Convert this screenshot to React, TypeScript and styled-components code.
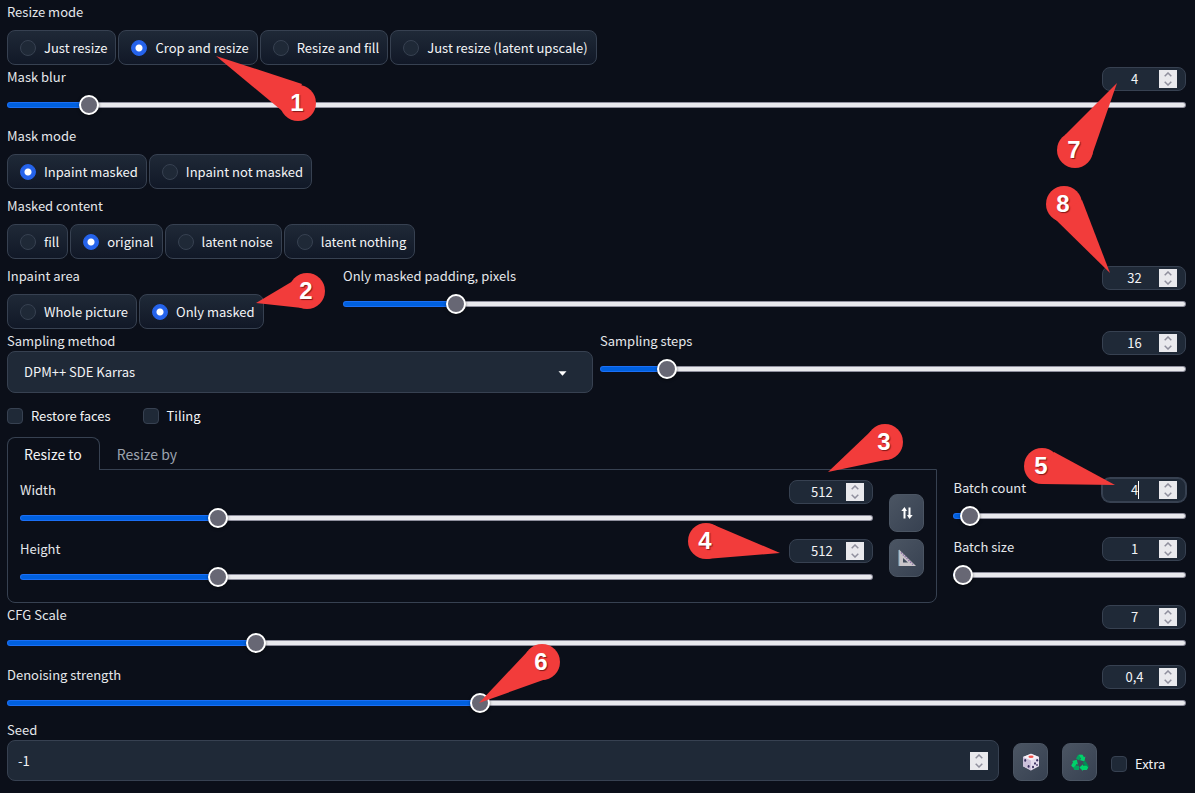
import React, { useId, useState } from "react";
import styled, { createGlobalStyle, css } from "styled-components";

const color = {
  page: "#0b0f19",
  field: "#1f2937",
  fieldDeep: "#111827",
  border: "#374151",
  text: "#f3f4f6",
  label: "#e5e7eb",
  muted: "#9ca3af",
  accent: "#2563eb",
  pin: "#f23c3b",
};

const GlobalStyle = createGlobalStyle`
  *, *::before, *::after { box-sizing: border-box; }
  body {
    margin: 0;
    background: ${color.page};
    color: ${color.text};
    font-family: "Noto Sans CJK SC", "Noto Sans", sans-serif;
    font-size: 13px;
    line-height: 20px;
  }
  button, input, select { font: inherit; color: inherit; margin: 0; }
`;

const Page = styled.main`
  position: relative;
  display: flex;
  flex-direction: column;
  padding: 2px 9px 12px 7px;
`;

const Row = styled.div<{ $top: number; $columns?: string; $gap?: number }>`
  display: grid;
  grid-template-columns: ${(p) => p.$columns ?? "minmax(0, 1fr)"};
  gap: ${(p) => p.$gap ?? 7}px;
  align-items: start;
  margin-top: ${(p) => p.$top}px;
`;

const LabelText = styled.label`
  display: block;
  color: ${color.label};
  line-height: 20px;
  white-space: nowrap;
`;

/* ---------- radio groups ---------- */

const Group = styled.fieldset`
  border: 0;
  margin: 0;
  padding: 0;
  min-width: 0;
`;

const Legend = styled.legend`
  padding: 0;
  margin-bottom: 8px;
  color: ${color.label};
`;

const Pills = styled.div`
  display: flex;
  gap: 2px;
`;

const Pill = styled.label`
  display: flex;
  align-items: center;
  gap: 8px;
  height: 35px;
  padding: 0 8px 0 12px;
  border: 1px solid ${color.border};
  border-radius: 8px;
  background: linear-gradient(to bottom, ${color.field}, ${color.fieldDeep});
  white-space: nowrap;
`;

const RadioInput = styled.input`
  appearance: none;
  flex: none;
  width: 16px;
  height: 16px;
  border: 1px solid ${color.border};
  border-radius: 50%;
  background: ${color.field};
  &:checked {
    border-color: ${color.accent};
    background: radial-gradient(circle, #fff 3px, ${color.accent} 4px);
  }
`;

function RadioGroup({ legend, options, initial }: { legend: string; options: string[]; initial: string }) {
  const name = useId();
  const [value, setValue] = useState(initial);
  return (
    <Group>
      <Legend>{legend}</Legend>
      <Pills>
        {options.map((o) => (
          <Pill key={o}>
            <RadioInput type="radio" name={name} checked={value === o} onChange={() => setValue(o)} />
            {o}
          </Pill>
        ))}
      </Pills>
    </Group>
  );
}

/* ---------- number boxes ---------- */

const NumberFrame = styled.div<{ $active?: boolean; $wide?: boolean }>`
  position: relative;
  display: flex;
  align-items: center;
  width: ${(p) => (p.$wide ? "100%" : "84px")};
  height: ${(p) => (p.$wide ? 41 : 24)}px;
  padding: 0 ${(p) => (p.$wide ? "10px 0 10px" : "8px 0 7px")};
  border: 1px solid ${color.border};
  border-radius: 8px;
  background: ${color.field};
  ${(p) => p.$active && css`box-shadow: 0 0 0 1px ${color.border};`}
`;

const NumberInput = styled.input<{ $wide?: boolean }>`
  flex: 1;
  min-width: 0;
  height: 20px;
  padding: 0;
  border: 0;
  outline: 0;
  background: none;
  text-align: ${(p) => (p.$wide ? "left" : "center")};
`;

const Caret = styled.span`
  position: absolute;
  left: 35px;
  top: 2px;
  width: 1px;
  height: 18px;
  background: #fff;
`;

const Spinner = styled.span`
  display: flex;
  flex-direction: column;
  flex: none;
  width: 18px;
  height: 18px;
  background: #e9e9ed;
`;

const SpinButton = styled.button`
  display: flex;
  justify-content: center;
  align-items: center;
  height: 9px;
  padding: 0;
  border: 0;
  background: none;
`;

function NumberBox({ id, label, value, active, wide }: { id: string; label?: string; value: string; active?: boolean; wide?: boolean }) {
  const [text, setText] = useState(value);
  const step = (d: number) => setText(String(Number(text.replace(",", ".")) + d).replace(".", ","));
  return (
    <NumberFrame $active={active} $wide={wide}>
      <NumberInput
        id={id}
        $wide={wide}
        aria-label={label}
        inputMode="decimal"
        value={text}
        onChange={(e) => setText(e.target.value)}
      />
      {active && <Caret />}
      <Spinner>
        <SpinButton type="button" aria-label="Increase" onClick={() => step(1)}>
          <svg width="8" height="5" viewBox="0 0 8 5" fill="none" stroke="#8f8f9d" strokeWidth="1.5">
            <path d="M0.7 4.2 4 1l3.3 3.2" />
          </svg>
        </SpinButton>
        <SpinButton type="button" aria-label="Decrease" onClick={() => step(-1)}>
          <svg width="8" height="5" viewBox="0 0 8 5" fill="none" stroke="#8f8f9d" strokeWidth="1.5">
            <path d="M0.7 0.8 4 4l3.3-3.2" />
          </svg>
        </SpinButton>
      </Spinner>
    </NumberFrame>
  );
}

/* ---------- sliders ---------- */

const SliderBlock = styled.div`
  display: flex;
  flex-direction: column;
  gap: 4px;
  min-width: 0;
`;

const SliderHead = styled.div`
  display: flex;
  justify-content: space-between;
  align-items: flex-start;
  height: 24px;
`;

const Range = styled.input`
  --fill: calc(10px + (100% - 20px) * var(--ratio));
  appearance: none;
  display: block;
  width: 100%;
  height: 20px;
  background: none;
  &::-webkit-slider-runnable-track {
    height: 6px;
    border: 1px solid transparent;
    border-radius: 3px;
    background:
      linear-gradient(to right, #0060df var(--fill), #e9e9ed var(--fill)) padding-box,
      linear-gradient(to right, #1b6ff5 var(--fill), #8f8f9d var(--fill)) border-box;
  }
  &::-webkit-slider-thumb {
    appearance: none;
    width: 20px;
    height: 20px;
    margin-top: -8px;
    margin-left: -1px;
    border: 2px solid #fff;
    border-radius: 50%;
    background: #676774;
    box-shadow: 0 1px 3px rgba(0, 0, 0, 0.5);
  }
`;

interface SliderProps {
  label: string;
  min: number;
  max: number;
  value: number;
  step?: number;
  shown?: string;
  active?: boolean;
}

function Slider({ label, min, max, value, step = 1, shown, active }: SliderProps) {
  const id = useId();
  const [v, setV] = useState(value);
  return (
    <SliderBlock>
      <SliderHead>
        <LabelText htmlFor={id}>{label}</LabelText>
        <NumberBox id={id + "n"} label={label} value={shown ?? String(value)} active={active} />
      </SliderHead>
      <Range
        id={id}
        type="range"
        min={min}
        max={max}
        step={step}
        value={v}
        onChange={(e) => setV(Number(e.target.value))}
        style={{ "--ratio": (v - min) / (max - min) } as React.CSSProperties}
      />
    </SliderBlock>
  );
}

/* ---------- select and check boxes ---------- */

const SelectWrap = styled.div`
  position: relative;
`;

const Select = styled.select`
  appearance: none;
  display: block;
  width: 100%;
  height: 42px;
  padding: 0 40px 0 16px;
  border: 1px solid ${color.border};
  border-radius: 8px;
  background: ${color.field};
`;

const SelectArrow = styled.svg`
  position: absolute;
  right: 26px;
  top: 20px;
  pointer-events: none;
`;

const Checks = styled.div`
  display: flex;
  gap: 32px;
  margin-top: 15px;
`;

const CheckLabel = styled.label`
  display: flex;
  align-items: center;
  gap: 8px;
  height: 16px;
  white-space: nowrap;
`;

const CheckInput = styled.input`
  appearance: none;
  flex: none;
  width: 16px;
  height: 16px;
  border: 1px solid ${color.border};
  border-radius: 4px;
  background: ${color.field};
  &:checked { background: ${color.accent}; }
`;

/* ---------- tabs ---------- */

const Tabs = styled.div`
  display: flex;
`;

const Tab = styled.button<{ $selected?: boolean }>`
  height: 33px;
  margin-bottom: -1px;
  padding: 0 17px 0 16px;
  border: 1px solid ${(p) => (p.$selected ? color.border : "transparent")};
  border-bottom: 0;
  border-radius: 8px 8px 0 0;
  background: ${(p) => (p.$selected ? color.page : "transparent")};
  color: ${(p) => (p.$selected ? color.text : color.muted)};
  font-size: 14px;
  z-index: ${(p) => (p.$selected ? 1 : 0)};
`;

const TabPanel = styled.div`
  display: flex;
  align-items: flex-start;
  gap: 16px;
  height: 134px;
  padding: 10px 12px 0;
  border: 1px solid ${color.border};
  border-radius: 0 0 8px 8px;
`;

const Stack = styled.div<{ $top?: number }>`
  flex: 1;
  display: flex;
  flex-direction: column;
  gap: 11px;
  min-width: 0;
  margin-top: ${(p) => p.$top ?? 0}px;
`;

const ToolStack = styled.div`
  display: flex;
  flex-direction: column;
  gap: 7px;
  margin-top: 14px;
`;

const ToolButton = styled.button`
  display: flex;
  align-items: center;
  justify-content: center;
  flex: none;
  width: 35px;
  height: 38px;
  padding: 0;
  border: 1px solid #4b5563;
  border-radius: 8px;
  background: linear-gradient(to bottom right, #4b5563, #374151);
`;

/* ---------- seed row ---------- */

const SeedRow = styled.div`
  display: flex;
  align-items: flex-end;
  gap: 14px;
  margin-top: 7px;
`;

const SeedField = styled.div`
  flex: 1;
`;

const ExtraCell = styled.div`
  width: 75px;
  padding-bottom: 9px;
`;

/* ---------- numbered pins ---------- */

const PinSvg = styled.svg<{ $side: "left" | "right"; $x: number; $y: number }>`
  position: absolute;
  ${(p) => p.$side}: ${(p) => p.$x}px;
  top: ${(p) => p.$y}px;
  overflow: visible;
  pointer-events: none;
  z-index: 2;
`;

const PinNumber = styled.text`
  fill: #fff;
  font-family: "Liberation Sans", sans-serif;
  font-size: 24px;
  font-weight: 700;
  text-anchor: middle;
  text-shadow: 1px 1px 1px rgba(60, 0, 0, 0.6);
`;

/* tail: the tip between the two points where it leaves the disc, in the 36px box of the disc */
const pins: { n: number; side: "left" | "right"; x: number; y: number; tail: string }[] = [
  { n: 1, side: "left", x: 280, y: 85, tail: "22,-1 -64,-29 7,30" },
  { n: 2, side: "left", x: 289, y: 273, tail: "4,8 -33,30 13,35" },
  { n: 3, side: "left", x: 867, y: 424, tail: "4,7 -39,48 23,35" },
  { n: 4, side: "left", x: 688, y: 523, tail: "26,2 92,30 18,36" },
  { n: 5, side: "right", x: 135, y: 448, tail: "30,4 91,37 18,36" },
  { n: 6, side: "left", x: 524, y: 644, tail: "4,7 -45,59 22,35" },
  { n: 7, side: "right", x: 102, y: 132, tail: "8,3 60,-49 35,23" },
  { n: 8, side: "right", x: 113, y: 186, tail: "36,14 64,87 8,32" },
];

function Pins() {
  return (
    <>
      {pins.map((p) => (
        <PinSvg key={p.n} width="36" height="36" $side={p.side} $x={p.x} $y={p.y}>
          <circle cx="18" cy="18" r="18" fill={color.pin} />
          <polygon points={p.tail} fill={color.pin} />
          <PinNumber x="17" y="26">{p.n}</PinNumber>
        </PinSvg>
      ))}
    </>
  );
}

/* ---------- icons ---------- */

const SwapIcon = () => (
  <svg width="12" height="14" viewBox="0 0 12 14" fill="none" stroke="#fff" strokeWidth="2">
    <path d="M3.5 12.5V3M8.5 1.5V11" />
    <path d="M0.3 5 3.5 1 6 5zM6 9l2.5 4L11.7 9z" fill="#fff" stroke="none" />
  </svg>
);

const RulerIcon = () => (
  <svg width="18" height="18" viewBox="0 0 18 18">
    <path d="M1 0.5v16.5h17z" fill="#c9c5c9" />
    <path d="M1 1v16" stroke="#8fb8d0" strokeWidth="1" />
    <path d="M5 9v4.6h5z" fill="#414b5a" />
    <path d="M3 3.6 15.4 16" stroke="#8e6fa8" strokeWidth="1.4" strokeDasharray="1.4 1.2" />
  </svg>
);

const DiceIcon = () => (
  <svg width="18" height="18" viewBox="0 0 18 18">
    <path d="M9 0.8 17 4v9.2L9 17.4 1 13.2V4z" fill="#e4dcec" />
    <path d="M9 0.8 17 4 9 7.4 1 4z" fill="#f6f1f8" />
    <path d="M1 4 9 7.4v10L1 13.2z" fill="#cdc1da" />
    <ellipse cx="9" cy="3.8" rx="2.6" ry="1.3" fill="#f4534c" />
    <g fill="#3b3060">
      <ellipse cx="3.2" cy="7.4" rx="1" ry="1.3" />
      <ellipse cx="6.6" cy="13.4" rx="1" ry="1.3" />
      <ellipse cx="11" cy="14" rx="1" ry="1.2" />
      <ellipse cx="13" cy="10.4" rx="1" ry="1.2" />
      <ellipse cx="15.2" cy="7.2" rx="1" ry="1.2" />
      <ellipse cx="15" cy="12" rx="0.8" ry="1" />
    </g>
  </svg>
);

const RecycleIcon = () => (
  <svg width="18" height="17" viewBox="0 0 18 17">
    <path d="M5 4.6 7.2 0.8h3.6L8 6.4z" fill="#00a65e" />
    <path d="M8 0.8h3.6l1.4 2.4 1.4-.8-1 5-4.8-1.4 1.4-.9z" fill="#00d26a" />
    <path d="M14.4 7 17.8 12.4 16 15.6h-3.6v-4.2h1.6l-2.4-2.6z" fill="#008f54" />
    <path d="M17.2 13.4 15.8 16H12v1L8.4 13.6l3.6-3.4v1.6h3.4z" fill="#00d26a" />
    <path d="M8 11.8V16H3.4L1.6 12.6 3.6 11.4z" fill="#00a65e" />
    <path d="M2 13.6.2 11.4 2.2 8 1 7 5.8 5.8l1.2 4.8-1.4-.7-1.4 2z" fill="#00d26a" />
  </svg>
);

export default function App() {
  const [tab, setTab] = useState("Resize to");
  return (
    <>
      <GlobalStyle />
      <Page>
        <RadioGroup
          legend="Resize mode"
          options={["Just resize", "Crop and resize", "Resize and fill", "Just resize (latent upscale)"]}
          initial="Crop and resize"
        />
        <Row $top={2}>
          <Slider label="Mask blur" min={0} max={64} value={4} />
        </Row>
        <Row $top={11}>
          <RadioGroup legend="Mask mode" options={["Inpaint masked", "Inpaint not masked"]} initial="Inpaint masked" />
        </Row>
        <Row $top={7}>
          <RadioGroup
            legend="Masked content"
            options={["fill", "original", "latent noise", "latent nothing"]}
            initial="original"
          />
        </Row>
        <Row $top={7} $columns="minmax(0, 329px) minmax(0, 1fr)">
          <RadioGroup legend="Inpaint area" options={["Whole picture", "Only masked"]} initial="Only masked" />
          <Slider label="Only masked padding, pixels" min={0} max={256} value={32} />
        </Row>
        <Row $top={2} $columns="repeat(2, minmax(0, 1fr))">
          <div>
            <LabelText htmlFor="sampler">Sampling method</LabelText>
            <SelectWrap>
              <Select id="sampler" defaultValue="DPM++ SDE Karras">
                <option>DPM++ SDE Karras</option>
              </Select>
              <SelectArrow width="9" height="5" viewBox="0 0 9 5">
                <path d="M0.5 0.2h8L4.5 4.8z" fill="#fff" />
              </SelectArrow>
            </SelectWrap>
          </div>
          <Slider label="Sampling steps" min={1} max={150} value={16} />
        </Row>
        <Checks>
          <CheckLabel><CheckInput type="checkbox" />Restore faces</CheckLabel>
          <CheckLabel><CheckInput type="checkbox" />Tiling</CheckLabel>
        </Checks>
        <Row $top={13} $columns="minmax(0, 4fr) minmax(0, 1fr)" $gap={16}>
          <div>
            <Tabs role="tablist">
              {["Resize to", "Resize by"].map((t) => (
                <Tab key={t} type="button" role="tab" aria-selected={tab === t} $selected={tab === t} onClick={() => setTab(t)}>
                  {t}
                </Tab>
              ))}
            </Tabs>
            <TabPanel role="tabpanel">
              <Stack>
                <Slider label="Width" min={64} max={2048} value={512} step={8} />
                <Slider label="Height" min={64} max={2048} value={512} step={8} />
              </Stack>
              <ToolStack>
                <ToolButton type="button" aria-label="Swap width and height"><SwapIcon /></ToolButton>
                <ToolButton type="button" aria-label="Detect image size"><RulerIcon /></ToolButton>
              </ToolStack>
            </TabPanel>
          </div>
          <Stack $top={41}>
            <Slider label="Batch count" min={1} max={100} value={4} active />
            <Slider label="Batch size" min={1} max={8} value={1} />
          </Stack>
        </Row>
        <Row $top={2}>
          <Slider label="CFG Scale" min={1} max={30} value={7} step={0.5} />
        </Row>
        <Row $top={12}>
          <Slider label="Denoising strength" min={0} max={1} value={0.4} step={0.01} shown="0,4" />
        </Row>
        <SeedRow>
          <SeedField>
            <LabelText htmlFor="seed">Seed</LabelText>
            <NumberBox id="seed" value="-1" wide />
          </SeedField>
          <ToolButton type="button" aria-label="Random seed"><DiceIcon /></ToolButton>
          <ToolButton type="button" aria-label="Reuse seed"><RecycleIcon /></ToolButton>
          <ExtraCell>
            <CheckLabel><CheckInput type="checkbox" />Extra</CheckLabel>
          </ExtraCell>
        </SeedRow>
        <Pins />
      </Page>
    </>
  );
}
